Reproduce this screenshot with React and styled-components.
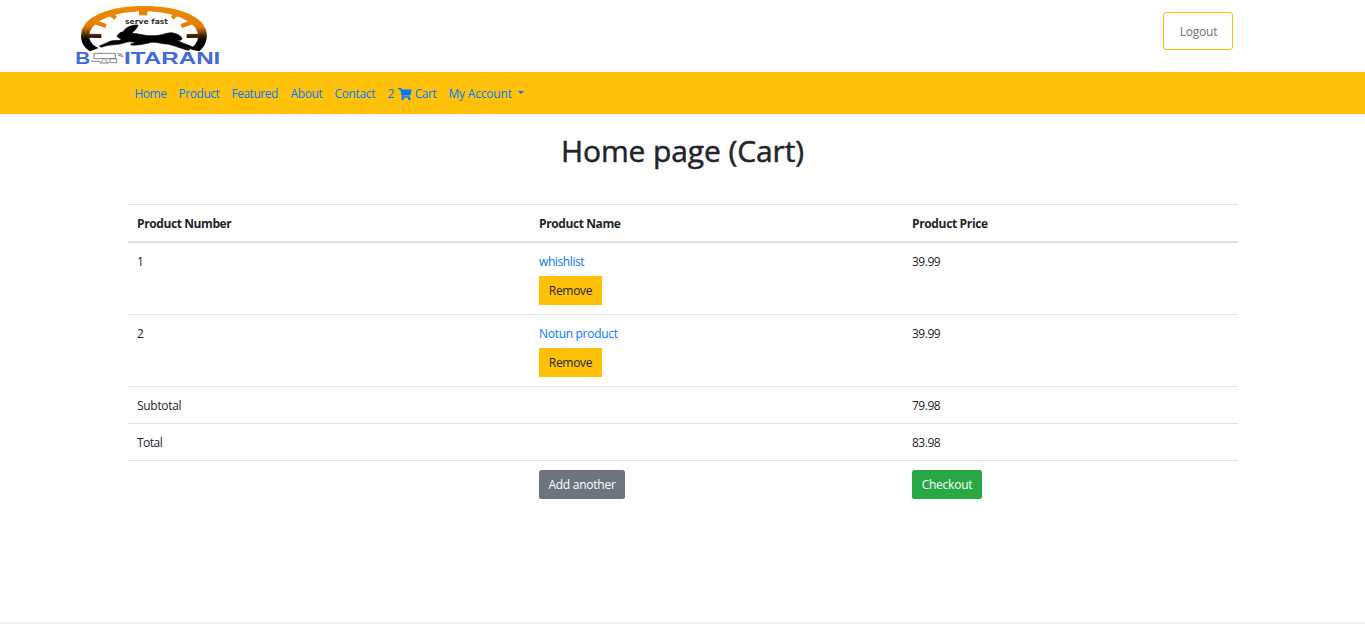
import React from "react";
import styled, { createGlobalStyle } from "styled-components";
import { FaShoppingCart } from "react-icons/fa";

const GlobalStyle = createGlobalStyle`
  *, *::before, *::after { box-sizing: border-box; }
  body {
    margin: 0;
    background: #fff;
    color: #212529;
    font-family: "Open Sans", "Noto Sans", sans-serif;
    font-size: 12px;
    line-height: 18px;
    overflow: hidden;
  }
`;

const Page = styled.div`
  display: flex;
  flex-direction: column;
  height: 624px;
  border-bottom: 2px solid #f0f0f0;
`;

const Header = styled.header`
  display: flex;
  justify-content: space-between;
  align-items: flex-start;
  height: 72px;
  padding: 0 132px 0 70px;
`;

const LogoSvg = styled.svg`
  display: block;
  width: 160px;
  height: 70px;
`;

const LogoutButton = styled.button`
  width: 70px;
  height: 38px;
  margin-top: 12px;
  padding: 2px 0 0 1px;
  border: 1px solid #ffc107;
  border-radius: 3px;
  background: transparent;
  color: #6c757d;
  font: inherit;
  letter-spacing: -0.2px;
`;

const Nav = styled.nav`
  display: flex;
  align-items: center;
  gap: 12px;
  height: 42px;
  padding: 2px 0 0 134.5px;
  background: #ffc107;
`;

const NavLink = styled.a`
  display: flex;
  align-items: center;
  width: ${(p) => p.$width}px;
  color: #007bff;
  letter-spacing: ${(p) => p.$track || 0}px;
  white-space: nowrap;
`;

const CartIcon = styled(FaShoppingCart)`
  width: 14px;
  height: 12px;
  margin: 0 3px 0 4px;
`;

const Caret = styled.span`
  margin: -3px 0 0 6px;
  border-top: 3.6px solid;
  border-left: 3.6px solid transparent;
  border-right: 3.6px solid transparent;
`;

const Title = styled.h1`
  margin: 19px 0 35px;
  font-size: 30px;
  line-height: 36px;
  font-weight: 500;
  letter-spacing: -0.1px;
  text-align: center;
  -webkit-text-stroke: 0.5px #212529;
`;

const Table = styled.div`
  width: 1110px;
  margin-left: 128px;
`;

const Row = styled.div`
  display: grid;
  grid-template-columns: 402px 373px 335px;
  border-top: ${(p) => (p.$first ? "0" : "1px solid #dee2e6")};
`;

const HeadRow = styled(Row)`
  border-bottom: 2px solid #dee2e6;
  font-weight: 700;
`;

const Cell = styled.div`
  min-height: 36px;
  padding: ${(p) => (p.$action ? "9px" : "10px 9px 8px")};
  letter-spacing: ${(p) => p.$track || 0}px;
  white-space: nowrap;
`;

const ProductLink = styled.a`
  display: block;
  margin-bottom: 5px;
  color: #007bff;
  letter-spacing: ${(p) => p.$track || 0}px;
`;

const Button = styled.button`
  display: block;
  width: ${(p) => p.$width}px;
  height: 29px;
  margin-bottom: ${(p) => p.$gap || 0}px;
  padding: 0;
  border: 0;
  border-radius: ${(p) => p.$radius || 0}px;
  background: ${(p) => p.$bg};
  color: ${(p) => p.$color || "#fff"};
  font: inherit;
  letter-spacing: ${(p) => p.$track || 0}px;
`;

function Logo() {
  return (
    <LogoSvg viewBox="0 0 480 210" role="img" aria-label="Boitarani">
      <defs>
        <linearGradient id="dial" gradientUnits="userSpaceOnUse" x1="0" y1="18" x2="0" y2="156">
          <stop offset="0" stopColor="#f28a05" />
          <stop offset="0.46" stopColor="#e27c05" />
          <stop offset="0.65" stopColor="#3a2003" />
          <stop offset="0.74" stopColor="#000" />
        </linearGradient>
      </defs>
      <path
        fill="url(#dial)"
        d="M60 154C38 140 30 120 34 98C42 48 120 18 222 18C325 18 402 48 410 98C413 120 404 140 388 154L362 147C378 134 386 120 384 102C377 62 306 34 222 34C138 34 67 60 58 102C56 118 64 136 86 144Z"
      />
      <path
        fill="none"
        stroke="url(#dial)"
        strokeWidth="12"
        d="M50 107L94 108M74 66L108 78M116 40L137 54M306 54L324 40M334 78L368 66M350 108L396 107"
      />
      <path fill="#ea8305" d="M207 24H232V46H207Z" />
      <path
        fill="#000"
        stroke="#000"
        strokeWidth="2"
        strokeLinejoin="round"
        d="M88 138L112 128C126 119 138 123 150 121L154 116C142 114 138 108 145 103C150 96 158 97 161 94C166 83 182 75 204 75C202 86 190 95 184 100C204 99 226 110 252 107C274 107 286 99 303 98C319 100 333 106 336 116C334 123 324 121 319 119C332 128 350 133 384 147L380 151C356 146 342 138 326 135L360 147L355 151C332 145 314 137 296 133C272 131 256 125 244 127C228 131 206 137 182 135L184 131L198 128C184 123 170 125 158 130C142 136 116 132 94 142Z"
      />
      <text x="165" y="72" textLength="129" lengthAdjust="spacingAndGlyphs" fontFamily="DejaVu Sans" fontSize="22" fontWeight="700" fill="#333">serve fast</text>
      <g fontFamily="Liberation Sans" fontSize="47" fontWeight="700" fill="#4169d9">
        <text x="16" y="192" textLength="45" lengthAdjust="spacingAndGlyphs">B</text>
        <text x="162" y="192" textLength="289" lengthAdjust="spacingAndGlyphs">ITARANI</text>
      </g>
      <g fill="none" stroke="#6b6b6b" strokeWidth="2.5">
        <path d="M72 160H136V176H72ZM64 184H90M100 178L90 189H116L104 178M120 176H140V188H120Z" />
        <path d="M142 160L154 164M144 166L160 170M150 160L158 168" />
      </g>
    </LogoSvg>
  );
}

export default function App() {
  return (
    <>
      <GlobalStyle />
      <Page>
        <Header>
          <Logo />
          <LogoutButton>Logout</LogoutButton>
        </Header>
        <Nav>
          <NavLink $width={32} $track={-0.5}>Home</NavLink>
          <NavLink $width={41} $track={-0.45}>Product</NavLink>
          <NavLink $width={47} $track={-0.5}>Featured</NavLink>
          <NavLink $width={32} $track={-0.4}>About</NavLink>
          <NavLink $width={41} $track={-0.35}>Contact</NavLink>
          <NavLink $width={49} $track={-0.4}>2<CartIcon />Cart</NavLink>
          <NavLink $width={76} $track={-0.2}>My Account<Caret /></NavLink>
        </Nav>
        <Title>Home page (Cart)</Title>
        <Table>
          <HeadRow>
            <Cell $track={-0.4}>Product Number</Cell>
            <Cell $track={-0.4}>Product Name</Cell>
            <Cell $track={-0.35}>Product Price</Cell>
          </HeadRow>
          <Row $first>
            <Cell>1</Cell>
            <Cell>
              <ProductLink $track={-0.4}>whishlist</ProductLink>
              <Button $width={63} $gap={1} $bg="#ffc107" $color="#212529" $track={-0.3}>Remove</Button>
            </Cell>
            <Cell $track={-0.5}>39.99</Cell>
          </Row>
          <Row>
            <Cell>2</Cell>
            <Cell>
              <ProductLink $track={-0.3}>Notun product</ProductLink>
              <Button $width={63} $gap={1} $bg="#ffc107" $color="#212529" $track={-0.3}>Remove</Button>
            </Cell>
            <Cell $track={-0.5}>39.99</Cell>
          </Row>
          <Row>
            <Cell $track={-0.3}>Subtotal</Cell>
            <Cell />
            <Cell $track={-0.5}>79.98</Cell>
          </Row>
          <Row>
            <Cell $track={-0.5}>Total</Cell>
            <Cell />
            <Cell $track={-0.5}>83.98</Cell>
          </Row>
          <Row>
            <Cell />
            <Cell $action>
              <Button $width={86} $bg="#6c757d" $radius={2.5} $track={-0.25}>Add another</Button>
            </Cell>
            <Cell $action>
              <Button $width={70} $bg="#28a745" $radius={2.5} $track={-0.25}>Checkout</Button>
            </Cell>
          </Row>
        </Table>
      </Page>
    </>
  );
}
